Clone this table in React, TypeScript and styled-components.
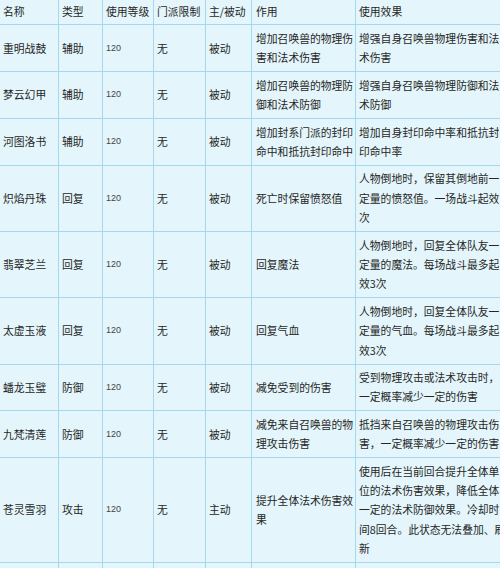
import React from 'react'
import styled, { createGlobalStyle } from 'styled-components'

interface Item {
  name: string
  kind: string
  level: string
  school: string
  mode: string
  effect: string
  result: string
}

const items: Item[] = [
  { name: '重明战鼓', kind: '辅助', level: '120', school: '无', mode: '被动', effect: '增加召唤兽的物理伤害和法术伤害', result: '增强自身召唤兽物理伤害和法术伤害' },
  { name: '梦云幻甲', kind: '辅助', level: '120', school: '无', mode: '被动', effect: '增加召唤兽的物理防御和法术防御', result: '增强自身召唤兽物理防御和法术防御' },
  { name: '河图洛书', kind: '辅助', level: '120', school: '无', mode: '被动', effect: '增加封系门派的封印命中和抵抗封印命中', result: '增加自身封印命中率和抵抗封印命中率' },
  { name: '炽焰丹珠', kind: '回复', level: '120', school: '无', mode: '被动', effect: '死亡时保留愤怒值', result: '人物倒地时，保留其倒地前一定量的愤怒值。一场战斗起效次' },
  { name: '翡翠芝兰', kind: '回复', level: '120', school: '无', mode: '被动', effect: '回复魔法', result: '人物倒地时，回复全体队友一定量的魔法。每场战斗最多起效3次' },
  { name: '太虚玉液', kind: '回复', level: '120', school: '无', mode: '被动', effect: '回复气血', result: '人物倒地时，回复全体队友一定量的气血。每场战斗最多起效3次' },
  { name: '蟠龙玉璧', kind: '防御', level: '120', school: '无', mode: '被动', effect: '减免受到的伤害', result: '受到物理攻击或法术攻击时，一定概率减少一定的伤害' },
  { name: '九梵清莲', kind: '防御', level: '120', school: '无', mode: '被动', effect: '减免来自召唤兽的物理攻击伤害', result: '抵挡来自召唤兽的物理攻击伤害，一定概率减少一定的伤害' },
  { name: '苍灵雪羽', kind: '攻击', level: '120', school: '无', mode: '主动', effect: '提升全体法术伤害效果', result: '使用后在当前回合提升全体单位的法术伤害效果，降低全体一定的法术防御效果。冷却时间8回合。此状态无法叠加、刷新' },
]

const GlobalStyle = createGlobalStyle`
  html, body {
    margin: 0;
    padding: 0;
    background: #e4f6fb;
    overflow: hidden;
  }
`

const Page = styled.div`
  width: 500px;
  height: 568px;
  overflow: hidden;
  background: #e4f6fb;
`

const Table = styled.table`
  margin: -1px 0 0 -1px;
  width: 508px;
  table-layout: fixed;
  border-collapse: collapse;
  font-family: "Noto Sans CJK SC", "Noto Sans", sans-serif;
  font-size: 10.8px;
  line-height: 19.4px;
  color: #262626;
`

const Cell = styled.td<{ $wide?: boolean; $num?: boolean }>`
  border: 1px solid #a3d9ec;
  padding: 3.5px 1px 3.5px ${(p) => (p.$wide ? '4px' : '3px')};
  vertical-align: middle;
  text-align: left;
  word-break: break-all;
  ${(p) =>
    p.$num &&
    `
    font-family: "Liberation Sans", Arial, sans-serif;
    font-size: 9px;
    color: #444;
  `}
`

const HeadCell = styled(Cell).attrs({ as: 'th' })`
  font-weight: normal;
  padding-top: 2px;
  padding-bottom: 3px;
`

const App: React.FC = () => {
  return (
    <Page>
      <GlobalStyle />
      <Table>
        <colgroup>
          <col style={{ width: 59 }} />
          <col style={{ width: 44 }} />
          <col style={{ width: 51 }} />
          <col style={{ width: 52 }} />
          <col style={{ width: 46 }} />
          <col style={{ width: 104 }} />
          <col style={{ width: 152 }} />
        </colgroup>
        <thead>
          <tr>
            <HeadCell>名称</HeadCell>
            <HeadCell>类型</HeadCell>
            <HeadCell>使用等级</HeadCell>
            <HeadCell>门派限制</HeadCell>
            <HeadCell>主/被动</HeadCell>
            <HeadCell $wide>作用</HeadCell>
            <HeadCell>使用效果</HeadCell>
          </tr>
        </thead>
        <tbody>
          {items.map((it) => (
            <tr key={it.name}>
              <Cell>{it.name}</Cell>
              <Cell>{it.kind}</Cell>
              <Cell $num>{it.level}</Cell>
              <Cell>{it.school}</Cell>
              <Cell>{it.mode}</Cell>
              <Cell $wide>{it.effect}</Cell>
              <Cell>{it.result}</Cell>
            </tr>
          ))}
          <tr>
            <Cell>&nbsp;</Cell>
            <Cell />
            <Cell />
            <Cell />
            <Cell />
            <Cell $wide />
            <Cell />
          </tr>
        </tbody>
      </Table>
    </Page>
  )
}

export default App
